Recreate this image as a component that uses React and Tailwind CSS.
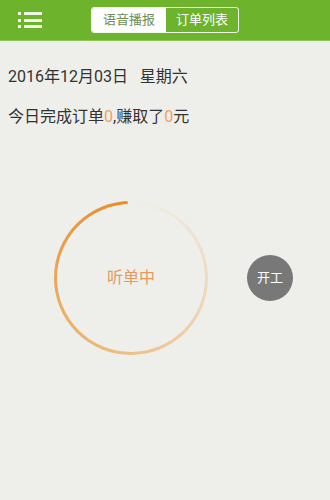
export default function App() {
  return (
    <div className="w-[330px] h-[500px] bg-[#eeefea] overflow-hidden font-['Roboto','Noto_Sans_CJK_SC',sans-serif]">
      {/* 顶部栏 */}
      <div className="h-[41px] bg-[#6db42c] border-b border-[#8cc55a] flex items-center relative">
        <div className="ml-[18px] flex flex-col gap-[3.5px]">
          {[0, 1, 2].map((i) => (
            <div key={i} className="flex items-center gap-[3px]">
              <div className="w-[3px] h-[3px] bg-white/90" />
              <div className="w-[18px] h-[3px] bg-white/90" />
            </div>
          ))}
        </div>
        <div className="absolute left-[91px] top-[7px] flex h-[26px] w-[148px] rounded-[3px] border border-white/90 overflow-hidden text-[13px]">
          <div className="w-[74px] bg-white flex items-center justify-center text-[#6e8e55]">语音播报</div>
          <div className="flex-1 flex items-center justify-center text-white">订单列表</div>
        </div>
      </div>

      <div className="pl-[8px] pt-[25px] text-[16px] text-[#333] leading-[22px]">
        2016年12月03日&nbsp;&nbsp;&nbsp;星期六
      </div>
      <div className="pl-[8px] mt-[18px] text-[16px] text-[#333] leading-[22px]">
        今日完成订单<span className="text-[#f0a060]">0</span>,赚取了<span className="text-[#f0a060]">0</span>元
      </div>

      <div className="flex items-center mt-[73px]">
        <div className="ml-[54px] w-[154px] h-[154px] rounded-full bg-[conic-gradient(from_2deg,rgba(236,150,50,0)_0deg,rgba(236,150,50,0.25)_100deg,rgba(236,150,50,0.6)_200deg,rgba(232,140,40,1)_355deg,rgba(232,140,40,0)_356deg)] p-[3px]">
          <div className="w-full h-full rounded-full bg-[#eeefea] flex items-center justify-center text-[16px] text-[#e39a5c]">
            听单中
          </div>
        </div>
        <div className="ml-[39px] w-[46px] h-[46px] rounded-full bg-[#787878] flex items-center justify-center text-white text-[13px]">
          开工
        </div>
      </div>
    </div>
  );
}
